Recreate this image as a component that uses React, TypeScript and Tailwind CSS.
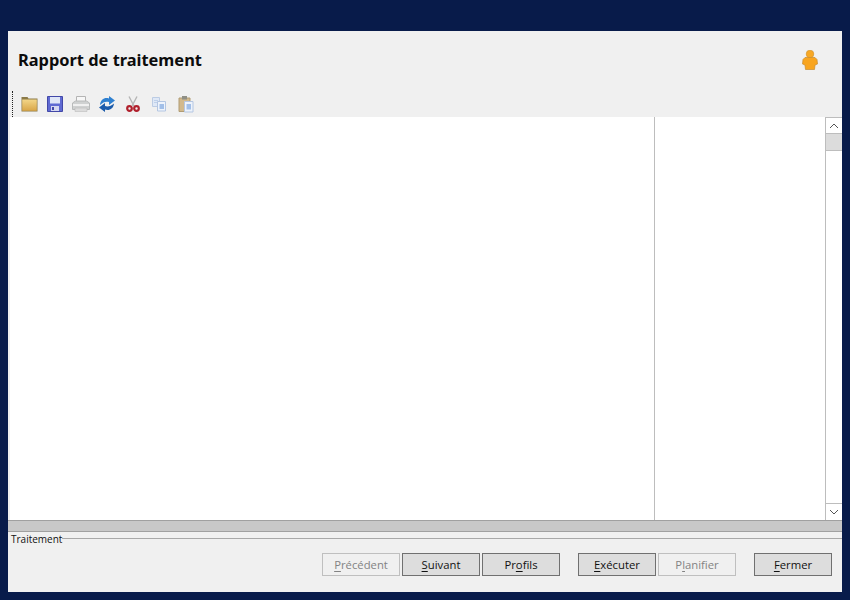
import React from "react";

const btn =
  "w-[78px] h-[23px] border flex items-center justify-center text-[11.3px] leading-none";

const Button = ({
  pre,
  u,
  post,
  disabled,
}: {
  pre?: string;
  u: string;
  post: string;
  disabled?: boolean;
}) => (
  <div
    className={`${btn} ${
      disabled
        ? "border-[#bfbfbf] bg-[#f0f0f0] text-[#838383]"
        : "border-[#707070] bg-[#dddddd] text-[#111111]"
    }`}
  >
    <span>
      {pre}
      <span className="underline underline-offset-2">{u}</span>
      {post}
    </span>
  </div>
);

const FolderIcon = () => (
  <svg width="17" height="16" viewBox="0 0 17 16">
    <defs>
      <linearGradient id="folder" x1="0" y1="0" x2="0" y2="1">
        <stop offset="0" stopColor="#f3d688" />
        <stop offset="1" stopColor="#d9a648" />
      </linearGradient>
    </defs>
    <path d="M0.5 1h6l1 1.5h9v13h-16z" fill="#8b7a48" />
    <path d="M1.2 3.5h14.6v11.3h-14.6z" fill="url(#folder)" />
  </svg>
);

const SaveIcon = () => (
  <svg width="16" height="16" viewBox="0 0 16 16">
    <path d="M0.5 0.5h15v15h-15z" fill="#5f6ad2" stroke="#4248a8" />
    <path d="M3 1h10v6.5h-10z" fill="#dfe6f7" />
    <path d="M4 10h8v5h-8z" fill="#d5d8f0" />
    <path d="M5 11h2v3h-2z" fill="#4248a8" />
  </svg>
);

const PrintIcon = () => (
  <svg width="18" height="16" viewBox="0 0 18 16">
    <path d="M4.5 0.5h9v6h-9z" fill="#f7f7f7" stroke="#b4b4b4" />
    <path d="M0.5 7l3-2h11l3 2v6.5h-17z" fill="#cfd1d1" stroke="#b8baba" />
    <path d="M1 8h16v2h-16z" fill="#f0f0f0" />
    <path d="M3 12h12v3.5h-12z" fill="#dcdcdc" stroke="#bcbcbc" strokeWidth="0.6" />
  </svg>
);

const RefreshIcon = () => (
  <svg width="16" height="16" viewBox="0 0 16 16">
    <path d="M1 9C1.5 3 6 1 10 2.5V0L16 4.5 10 9V6C7 5 4 6 1 9z" fill="#2f80d0" />
    <path d="M15 7.5C14.5 13 10 15 6 13.5V16L0 11.5 6 7v3c3 1 6 0 9-2.5z" fill="#1c5cab" />
  </svg>
);

const CutIcon = () => (
  <svg width="14" height="16" viewBox="0 0 14 16">
    <path d="M3 0.5L8 10M11 0.5L6 10" stroke="#b5b5b5" strokeWidth="1.4" fill="none" />
    <circle cx="3.5" cy="12.5" r="2.3" fill="none" stroke="#b0202c" strokeWidth="2.2" />
    <circle cx="10.5" cy="12.5" r="2.3" fill="none" stroke="#b0202c" strokeWidth="2.2" />
  </svg>
);

const CopyIcon = () => (
  <svg width="16" height="16" viewBox="0 0 16 16">
    <path d="M1.5 1.5h7v9h-7z" fill="#dfe8f6" stroke="#bccce4" />
    <path d="M3 4h4v1h-4zM3 6h4v1h-4z" fill="#bed0ea" />
    <path d="M6.5 5.5h8v9.5h-8z" fill="#eef3fb" stroke="#b4c6e2" />
    <path d="M8.5 8h4.5v5h-4.5z" fill="#a2bfe8" />
  </svg>
);

const PasteIcon = () => (
  <svg width="16" height="18" viewBox="0 0 16 18">
    <path d="M1 3h11v13.5h-11z" fill="#d2b98c" stroke="#b09c74" />
    <path d="M4 1h5v3.5h-5z" fill="#8f8f86" />
    <path d="M6.5 6.5h8.5v10.5h-8.5z" fill="#eef3fb" stroke="#b4c6e2" />
    <path d="M8.5 9h4.5v5.5h-4.5z" fill="#a2bfe8" />
  </svg>
);

const UserIcon = () => (
  <svg width="16" height="20" viewBox="0 0 16 20">
    <circle cx="8" cy="4" r="3.8" fill="#f8a824" stroke="#d6962f" strokeWidth="0.7" />
    <path
      d="M3 7.5h10l2 2 .5 4.5-2.5 1-.5 4.5h-9l-.5-4.5-2.5-1 .5-4.5z"
      fill="#f9a51f"
      stroke="#c98d2e"
      strokeWidth="0.7"
    />
  </svg>
);

export default function App() {
  return (
    <div
      className="w-[850px] h-[600px] bg-[#081b4a] pt-[31px] pl-2 pr-2 pb-2 overflow-hidden"
      style={{ fontFamily: '"Open Sans", "Noto Sans", sans-serif' }}
    >
      <div className="w-[834px] h-[561px] bg-[#f0f0f0] flex flex-col">
        <div className="h-[59px] flex items-center justify-between pl-[10px] pr-[24px] shrink-0">
          <h1
            className="text-[16.4px] leading-none font-bold text-[#0c0c0c]"
            style={{ fontFamily: '"Noto Sans", sans-serif' }}
          >
            Rapport de traitement
          </h1>
          <div className="-mt-[1px]">
            <UserIcon />
          </div>
        </div>

        <div className="h-[27px] flex items-center pl-1 shrink-0">
          <div className="w-px h-[26px] border-l border-dotted border-[#222222]" />
          <div className="flex items-center ml-[8px]">
            <FolderIcon />
            <div className="ml-[9px]">
              <SaveIcon />
            </div>
            <div className="ml-[9px]">
              <PrintIcon />
            </div>
            <div className="ml-[9px]">
              <RefreshIcon />
            </div>
            <div className="ml-[11px]">
              <CutIcon />
            </div>
            <div className="ml-[11px]">
              <CopyIcon />
            </div>
            <div className="ml-[11px]">
              <PasteIcon />
            </div>
          </div>
        </div>

        <div className="h-[403px] flex pl-[2px] shrink-0">
          <div className="w-[645px] bg-white border-r border-[#bdbdbd] h-full" />
          <div className="w-[170px] bg-white h-full" />
          <div className="w-[17px] bg-white border-l border-[#bdbdbd] flex flex-col">
            <div className="h-[17px] flex items-center justify-center border-y border-[#bdbdbd]">
              <svg width="10" height="6" viewBox="0 0 10 6">
                <path d="M1 5l4-4 4 4" fill="none" stroke="#555555" />
              </svg>
            </div>
            <div className="h-[17px] bg-[#dcdcdc] border-b border-[#bdbdbd]" />
            <div className="flex-1" />
            <div className="h-[17px] flex items-center justify-center border-t border-[#bdbdbd]">
              <svg width="10" height="6" viewBox="0 0 10 6">
                <path d="M1 1l4 4 4-4" fill="none" stroke="#555555" />
              </svg>
            </div>
          </div>
        </div>

        <div className="h-[12px] bg-[#c8c8c8] border-y border-[#a0a0a0] shrink-0" />

        <div className="flex items-center h-[13px] pl-[3px] shrink-0">
          <span className="text-[10px] leading-none text-[#111111]">Traitement</span>
          <div className="flex-1 h-px bg-[#a8a8a8] -mt-[1px]" />
        </div>

        <div className="flex justify-end pr-[10px] mt-[8px]">
          <div className="flex gap-[2px]">
            <Button u="P" post="récédent" disabled />
            <Button u="S" post="uivant" />
            <Button pre="Pr" u="o" post="fils" />
          </div>
          <div className="flex gap-[2px] ml-[18px]">
            <Button u="E" post="xécuter" />
            <Button pre="P" u="l" post="anifier" disabled />
          </div>
          <div className="ml-[18px]">
            <Button u="F" post="ermer" />
          </div>
        </div>
      </div>
    </div>
  );
}
